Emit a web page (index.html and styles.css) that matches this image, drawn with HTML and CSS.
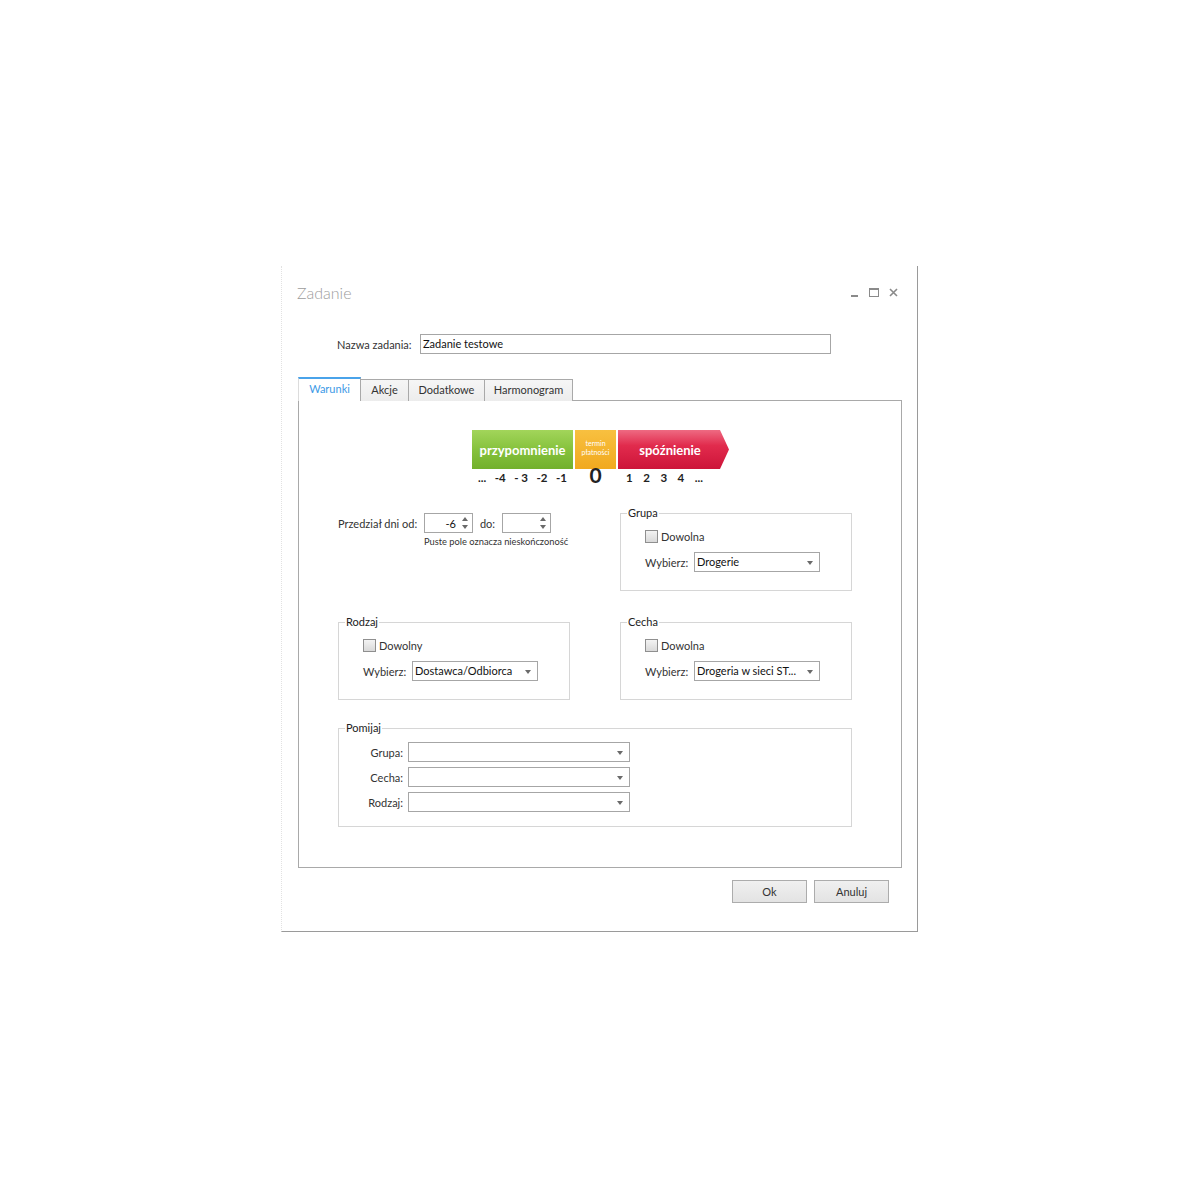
FILE: index.html
```html
<!DOCTYPE html>
<html lang="pl">
<head>
    <meta charset="UTF-8">
    <title>Zadanie</title>
    <link rel="stylesheet" href="styles.css">
</head>
<body>
    <div class="window">
        <div class="titlebar">
            <span class="title">Zadanie</span>
            <div class="controls">
                <svg width="9" height="9" viewBox="0 0 9 9"><rect x="1" y="7" width="7" height="2" fill="#8a8a8a"/></svg>
                <svg width="10" height="9" viewBox="0 0 10 9"><rect x="0.5" y="0.5" width="9" height="8" fill="none" stroke="#8a8a8a"/><rect x="0" y="0" width="10" height="2" fill="#8a8a8a"/></svg>
                <svg width="9" height="9" viewBox="0 0 9 9"><path d="M1 1 L8 8 M8 1 L1 8" stroke="#8a8a8a" stroke-width="1.6"/></svg>
            </div>
        </div>

        <div class="name-row">
            <label>Nazwa zadania:</label>
            <div class="textbox">Zadanie testowe</div>
        </div>

        <div class="tabs">
            <div class="tab tab-warunki active">Warunki</div>
            <div class="tab tab-akcje">Akcje</div>
            <div class="tab tab-dodatkowe">Dodatkowe</div>
            <div class="tab tab-harmonogram">Harmonogram</div>
        </div>

        <div class="panel">
            <div class="banner">
                <div class="b-col b-green">
                    <div class="b-box">przypomnienie</div>
                    <div class="b-nums">
                        <span>...</span><span>-4</span><span>- 3</span><span>-2</span><span>-1</span>
                    </div>
                </div>
                <div class="b-col b-orange">
                    <div class="b-box">
                        <span>termin</span>
                        <span>płatności</span>
                    </div>
                    <div class="b-zero">0</div>
                </div>
                <div class="b-col b-red">
                    <div class="b-box">spóźnienie</div>
                    <div class="b-nums">
                        <span>1</span><span>2</span><span>3</span><span>4</span><span>...</span>
                    </div>
                </div>
            </div>

            <div class="conditions">
                <div class="range">
                    <div class="range-row">
                        <label>Przedział dni od:</label>
                        <div class="spinner">
                            <span class="spin-value">-6</span>
                            <span class="spin-arrows"><i class="up"></i><i class="down"></i></span>
                        </div>
                        <label class="do-label">do:</label>
                        <div class="spinner">
                            <span class="spin-value"></span>
                            <span class="spin-arrows"><i class="up"></i><i class="down"></i></span>
                        </div>
                    </div>
                    <div class="hint">Puste pole oznacza nieskończoność</div>
                </div>

                <fieldset class="group">
                    <legend>Grupa</legend>
                    <div class="fs-body">
                        <div class="check-row"><span class="checkbox"></span>Dowolna</div>
                        <div class="pick-row">
                            <label>Wybierz:</label>
                            <div class="select">Drogerie</div>
                        </div>
                    </div>
                </fieldset>

                <fieldset class="group">
                    <legend>Rodzaj</legend>
                    <div class="fs-body">
                        <div class="check-row"><span class="checkbox"></span>Dowolny</div>
                        <div class="pick-row">
                            <label>Wybierz:</label>
                            <div class="select">Dostawca/Odbiorca</div>
                        </div>
                    </div>
                </fieldset>

                <fieldset class="group">
                    <legend>Cecha</legend>
                    <div class="fs-body">
                        <div class="check-row"><span class="checkbox"></span>Dowolna</div>
                        <div class="pick-row">
                            <label>Wybierz:</label>
                            <div class="select">Drogeria w sieci ST...</div>
                        </div>
                    </div>
                </fieldset>

                <fieldset class="group skip">
                    <legend>Pomijaj</legend>
                    <div class="fs-body">
                        <div class="skip-row">
                            <label>Grupa:</label>
                            <div class="select wide"></div>
                        </div>
                        <div class="skip-row">
                            <label>Cecha:</label>
                            <div class="select wide"></div>
                        </div>
                        <div class="skip-row">
                            <label>Rodzaj:</label>
                            <div class="select wide"></div>
                        </div>
                    </div>
                </fieldset>
            </div>
        </div>

        <div class="buttons">
            <button type="button">Ok</button>
            <button type="button">Anuluj</button>
        </div>
    </div>
</body>
</html>
```

FILE: styles.css
```css
* {
    box-sizing: border-box;
}
body {
    margin: 0;
    background: #fff;
    font-family: Lato, "Liberation Sans", sans-serif;
    font-size: 11px;
    color: #333;
}
.window {
    width: 637px;
    height: 666px;
    margin: 266px 0 0 281px;
    padding-top: 16px;
    border-left: 1px dotted #e2e2e2;
    border-right: 1px solid #9a9a9a;
    border-bottom: 1px solid #9a9a9a;
    background: #fff;
}
.titlebar {
    display: flex;
    justify-content: space-between;
    align-items: center;
    height: 20px;
    margin: 0 19px 0 15px;
}
.title {
    font-size: 16px;
    font-weight: 300;
    color: #9c9c9c;
}
.controls {
    display: flex;
    gap: 10px;
    align-items: center;
}
.name-row {
    display: flex;
    align-items: center;
    margin: 32px 0 0 55px;
    height: 20px;
}
.name-row label {
    width: 83px;
}
.textbox {
    width: 411px;
    height: 20px;
    border: 1px solid #a6a6a6;
    padding: 2px 2px;
    line-height: 14px;
    color: #111;
}
.tabs {
    display: flex;
    align-items: flex-end;
    margin: 23px 0 -1px 16px;
    height: 24px;
}
.tab {
    height: 22px;
    border: 1px solid #a9a9a9;
    border-bottom: none;
    background: linear-gradient(#f6f6f6, #ececec);
    text-align: center;
    line-height: 20px;
    margin-left: -1px;
}
.tab.active {
    height: 24px;
    margin-left: 0;
    border-top: 2px solid #4aa3ea;
    border-left: 1px solid #dcdcdc;
    background: #fff;
    color: #3d9ae6;
    position: relative;
    z-index: 1;
    line-height: 20px;
}
.tab-warunki { width: 63px; }
.tab-akcje { width: 49px; }
.tab-dodatkowe { width: 77px; }
.tab-harmonogram { width: 89px; }
.panel {
    width: 604px;
    height: 468px;
    margin-left: 16px;
    border: 1px solid #a9a9a9;
    padding: 29px 48px 0 39px;
}
.banner {
    display: flex;
    justify-content: center;
    gap: 2px;
    margin-left: 10px;
}
.b-col {
    display: flex;
    flex-direction: column;
}
.b-box {
    height: 39px;
    display: flex;
    align-items: center;
    justify-content: center;
    color: #fff;
    font-weight: bold;
    font-size: 13px;
}
.b-green { width: 101px; }
.b-orange { width: 41px; }
.b-red { width: 111px; }
.b-green .b-box {
    background: linear-gradient(#a2d55a, #86c23d 50%, #72b02c);
}
.b-orange .b-box {
    background: linear-gradient(#f8c040, #f1a91f);
    flex-direction: column;
    font-size: 7px;
    font-weight: normal;
    line-height: 9px;
    padding-bottom: 4px;
}
.b-red .b-box {
    background: linear-gradient(#ee6a82, #e12b4d 40%, #cd1439);
    clip-path: polygon(0 0, calc(100% - 9px) 0, 100% 50%, calc(100% - 9px) 100%, 0 100%);
    padding-right: 7px;
}
.b-nums {
    display: flex;
    justify-content: space-between;
    font-weight: bold;
    font-size: 11.5px;
    color: #222;
    height: 17px;
    line-height: 17px;
}
.b-green .b-nums {
    padding: 0 6px;
}
.b-red .b-nums {
    padding: 0 26px 0 8px;
}
.b-zero {
    text-align: center;
    font-weight: bold;
    font-size: 21px;
    line-height: 12px;
    color: #222;
}
.conditions {
    display: grid;
    grid-template-columns: 232px 232px;
    column-gap: 50px;
    row-gap: 24px;
    margin-top: 20px;
}
.range {
    padding-top: 7px;
}
.range-row {
    display: flex;
    align-items: center;
}
.range-row label {
    width: 86px;
}
.range-row .do-label {
    width: 29px;
    text-align: center;
}
.spinner {
    width: 49px;
    height: 20px;
    border: 1px solid #a6a6a6;
    display: flex;
    align-items: center;
    justify-content: flex-end;
    padding-right: 4px;
    color: #111;
}
.spin-value {
    margin-right: 6px;
}
.spin-arrows {
    display: flex;
    flex-direction: column;
    gap: 4px;
}
.spin-arrows i {
    width: 0;
    height: 0;
    border-left: 3.5px solid transparent;
    border-right: 3.5px solid transparent;
}
.spin-arrows .up {
    border-bottom: 4px solid #6a6a6a;
}
.spin-arrows .down {
    border-top: 4px solid #6a6a6a;
}
.hint {
    margin: 3px 0 0 86px;
    font-size: 9.3px;
    white-space: nowrap;
}
fieldset.group {
    margin: 0;
    padding: 0 6px;
    border: 1px solid #d6d6d6;
    min-width: 0;
}
fieldset.group legend {
    padding: 0 1px;
    line-height: 14px;
    color: #222;
}
.fs-body {
    padding: 6px 0 18px 18px;
}
.check-row {
    display: flex;
    align-items: center;
    height: 20px;
}
.checkbox {
    width: 13px;
    height: 13px;
    border: 1px solid #8f8f8f;
    background: linear-gradient(#f3f3f3, #d9d9d9);
    margin-right: 3px;
}
.pick-row {
    display: flex;
    align-items: center;
    margin-top: 6px;
}
.pick-row label {
    width: 49px;
}
.select {
    position: relative;
    width: 126px;
    height: 20px;
    border: 1px solid #a6a6a6;
    padding: 0 2px;
    line-height: 18px;
    color: #111;
    white-space: nowrap;
}
.select::after {
    content: "";
    position: absolute;
    right: 6px;
    top: 8px;
    border-left: 3.5px solid transparent;
    border-right: 3.5px solid transparent;
    border-top: 4px solid #6a6a6a;
}
.skip {
    grid-column: 1 / 3;
    margin-top: -3px !important;
}
.skip .fs-body {
    padding: 7px 0 14px 18px;
}
.skip-row {
    display: flex;
    align-items: center;
    margin-bottom: 5px;
}
.skip-row:last-child {
    margin-bottom: 0;
}
.skip-row label {
    width: 40px;
    margin-right: 5px;
    text-align: right;
}
.select.wide {
    width: 222px;
}
.buttons {
    display: flex;
    justify-content: flex-end;
    gap: 7px;
    margin: 12px 28px 0 0;
}
button {
    width: 75px;
    height: 23px;
    border: 1px solid #acacac;
    background: linear-gradient(#f0f0f0, #e3e3e3);
    font-family: Lato, "Liberation Sans", sans-serif;
    font-size: 11px;
    color: #333;
}
```
